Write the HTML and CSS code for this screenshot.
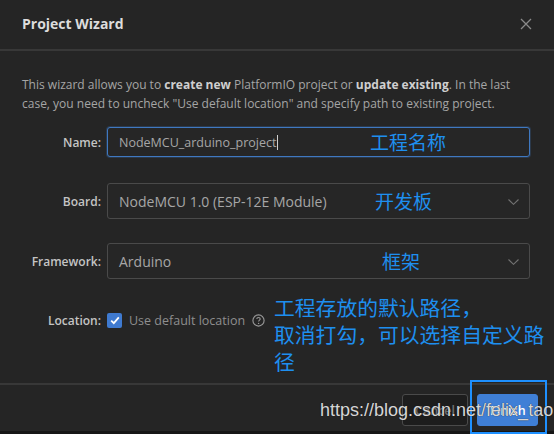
FILE: index.html
```html
<!DOCTYPE html>
<html lang="zh-CN">
<head>
  <meta charset="UTF-8" />
  <title>Project Wizard</title>
  <link rel="stylesheet" href="styles.css">
</head>
<body>
  <div class="wizard">
    <div class="wizard-header">
      <h2>Project Wizard</h2>
      <svg class="close" width="12" height="12" viewBox="0 0 12 12"><path d="M1 1L11 11M11 1L1 11" stroke="#8a8a8a" stroke-width="1.3" fill="none"/></svg>
    </div>

    <div class="wizard-body">
      <p class="intro">This wizard allows you to <strong>create new</strong> PlatformIO project or <strong>update existing</strong>. In the last case, you need to uncheck "Use default location" and specify path to existing project.</p>

      <div class="row row-name">
        <label>Name:</label>
        <div class="field field-active">NodeMCU_arduino_project<span class="caret"></span>
          <span class="note note-name">工程名称</span>
        </div>
      </div>

      <div class="row row-board">
        <label>Board:</label>
        <div class="field field-select">NodeMCU 1.0 (ESP-12E Module)
          <span class="note note-board">开发板</span>
          <svg class="chevron" width="11" height="6" viewBox="0 0 11 6"><path d="M0.5 0.5L5.5 5.3L10.5 0.5" stroke="#727272" stroke-width="1.1" fill="none"/></svg>
        </div>
      </div>

      <div class="row row-framework">
        <label>Framework:</label>
        <div class="field field-select">Arduino
          <span class="note note-fw">框架</span>
          <svg class="chevron" width="11" height="6" viewBox="0 0 11 6"><path d="M0.5 0.5L5.5 5.3L10.5 0.5" stroke="#727272" stroke-width="1.1" fill="none"/></svg>
        </div>
      </div>

      <div class="row row-location">
        <label>Location:</label>
        <div class="check">
          <span class="box"><svg width="10" height="9" viewBox="0 0 10 9"><path d="M1.2 4.6L3.8 7.2L8.8 1.4" stroke="#fff" stroke-width="1.8" fill="none"/></svg></span>
          <span class="check-text">Use default location</span>
          <svg class="help" width="13" height="13" viewBox="0 0 13 13"><circle cx="6.5" cy="6.5" r="5.6" stroke="#9a9a9a" stroke-width="1.1" fill="none"/><path d="M4.8 5.1C4.8 4 5.6 3.5 6.5 3.5C7.4 3.5 8.2 4.1 8.2 5C8.2 6.1 6.6 6.2 6.6 7.6" stroke="#9a9a9a" stroke-width="1.1" fill="none"/><circle cx="6.6" cy="9.4" r="0.7" fill="#9a9a9a"/></svg>
        </div>
        <p class="note note-location">工程存放的默认路径，<br>取消打勾，可以选择自定义路<br>径</p>
      </div>
    </div>

    <div class="wizard-footer">
      <button class="btn btn-cancel">Cancel</button>
      <button class="btn btn-finish">Finish</button>
      <span class="highlight"></span>
      <span class="watermark">https://blog.csdn.net/felix_tao</span>
    </div>
    <div class="taskbar"></div>
  </div>
</body>
</html>
```

FILE: styles.css
```css
* {
  box-sizing: border-box;
  margin: 0;
  padding: 0;
}
body {
  background: #252525;
  font-family: 'Open Sans', 'Noto Sans', sans-serif;
  color: #a8a8a8;
}
.wizard {
  width: 554px;
  height: 434px;
  background: #252525;
  display: flex;
  flex-direction: column;
}
.wizard-header {
  height: 51px;
  border-bottom: 2px solid #383838;
  display: flex;
  align-items: center;
  justify-content: space-between;
  padding: 0 22px;
}
.wizard-header h2 {
  font-size: 14px;
  font-weight: 700;
  color: #dcdcdc;
  margin-top: -2px;
}
.close {
  margin-top: -2px;
}
.wizard-body {
  padding: 24px 24px 0 22px;
  height: 332px;
}
.intro {
  font-size: 12px;
  line-height: 19px;
  color: #a5a5a5;
}
.intro strong {
  color: #cfcfcf;
  font-weight: 700;
}
.row {
  display: flex;
  align-items: center;
  position: relative;
}
.row label {
  width: 79px;
  text-align: right;
  font-size: 12px;
  font-weight: 600;
  color: #c4c4c4;
  margin-right: 6px;
}
.field {
  flex: 1;
  position: relative;
  display: flex;
  align-items: center;
  border: 1px solid #4a4a4a;
  border-radius: 3px;
  padding: 0 11px;
  font-size: 13px;
  color: #a6a6a6;
  background: #262626;
}
.row-name {
  margin-top: 14px;
}
.row-name .field {
  height: 30px;
  border-color: #3f78c0;
  box-shadow: 0 0 0 1px rgba(63, 120, 192, 0.25);
  font-size: 12.5px;
}
.caret {
  width: 1px;
  height: 15px;
  background: #cfcfcf;
  margin-left: 1px;
}
.row-board {
  margin-top: 26px;
}
.row-framework {
  margin-top: 24px;
}
.field-select {
  height: 36px;
  font-size: 14px;
}
.chevron {
  position: absolute;
  right: 10px;
  top: 15px;
}
.row-location {
  margin-top: 33px;
}
.check {
  display: flex;
  align-items: center;
}
.box {
  width: 15px;
  height: 15px;
  background: #3f7ad0;
  border-radius: 2px;
  display: flex;
  align-items: center;
  justify-content: center;
  margin-right: 7px;
}
.check-text {
  font-size: 12.5px;
  color: #8e8e8e;
  margin-right: 7px;
}
.note {
  font-family: 'Noto Sans CJK SC', sans-serif;
  color: #1e8fef;
  font-size: 19px;
  line-height: 1;
  position: absolute;
  white-space: nowrap;
}
.note-name {
  left: 262px;
  top: 4px;
}
.note-board {
  left: 267px;
  top: 7px;
}
.note-fw {
  left: 274px;
  top: 7px;
}
.note-location {
  font-size: 20.8px;
  line-height: 27px;
  left: 252px;
  top: -18px;
}
.wizard-footer {
  flex: 1;
  border-top: 2px solid #383838;
  position: relative;
  display: flex;
  justify-content: flex-end;
  align-items: flex-start;
  gap: 9px;
  padding: 9px 16px 0 0;
}
.btn {
  height: 32px;
  border-radius: 3px;
  font-family: 'Open Sans', sans-serif;
  font-size: 12.5px;
  font-weight: 600;
  padding: 0 12px;
}
.btn-cancel {
  width: 66px;
  background: #1d1d1d;
  border: 1px solid #4a4a4a;
  color: #6e6e6e;
}
.btn-finish {
  width: 61px;
  background: #3f7fd6;
  border: 1px solid #3f7fd6;
  color: #fff;
}
.highlight {
  position: absolute;
  left: 470px;
  top: -5px;
  width: 77px;
  height: 54px;
  border: 2px solid #1e90ff;
}
.watermark {
  position: absolute;
  left: 320px;
  top: 15px;
  white-space: nowrap;
  font-family: 'Liberation Sans', sans-serif;
  font-size: 18px;
  color: #d6d6d6;
  text-shadow: 0 0 1px #1a1a1a;
}
.taskbar {
  height: 3px;
  background: #161616;
}
```
